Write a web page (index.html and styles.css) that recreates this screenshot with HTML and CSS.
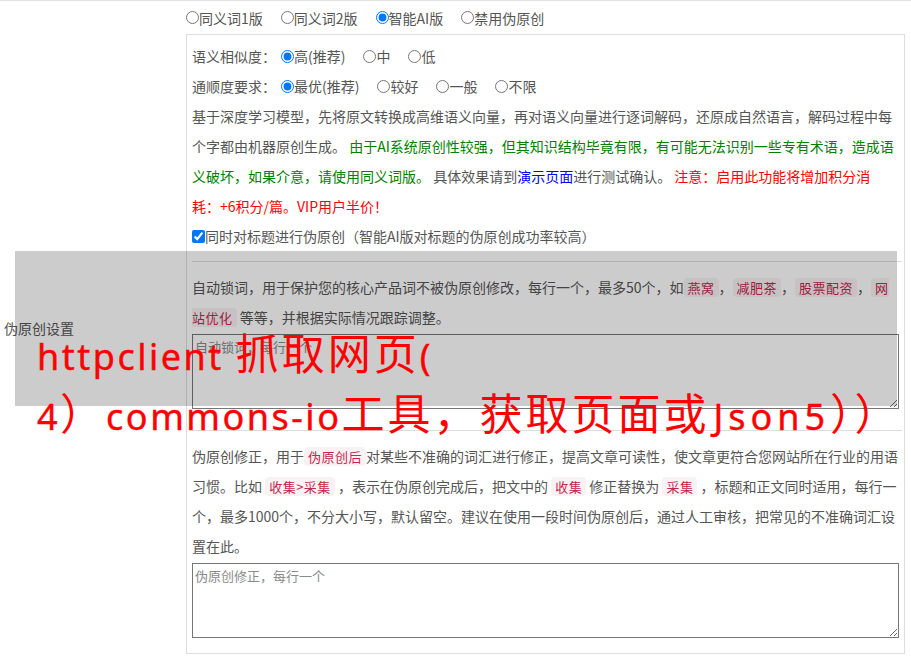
FILE: index.html
```html
<!DOCTYPE html>
<html lang="zh-CN">
<head>
<meta charset="utf-8">
<title>伪原创设置</title>
<link rel="stylesheet" href="styles.css">
</head>
<body>
<div class="form-row">
  <div class="row-label">伪原创设置</div>
  <div class="row-field">
    <div class="mode-options">
      <label class="opt"><input type="radio" name="mode">同义词1版</label>
      <label class="opt"><input type="radio" name="mode">同义词2版</label>
      <label class="opt"><input type="radio" name="mode" checked>智能AI版</label>
      <label class="opt"><input type="radio" name="mode">禁用伪原创</label>
    </div>
    <div class="settings-box">
      <div class="line">语义相似度：<label class="opt first"><input type="radio" name="sim" checked>高(推荐)</label><label class="opt"><input type="radio" name="sim">中</label><label class="opt"><input type="radio" name="sim">低</label></div>
      <div class="line">通顺度要求：<label class="opt first"><input type="radio" name="flu" checked>最优(推荐)</label><label class="opt"><input type="radio" name="flu">较好</label><label class="opt"><input type="radio" name="flu">一般</label><label class="opt"><input type="radio" name="flu">不限</label></div>
      <p class="desc">基于深度学习模型，先将原文转换成高维语义向量，再对语义向量进行逐词解码，还原成自然语言，解码过程中每<br>个字都由机器原创生成。 <span class="green">由于AI系统原创性较强，但其知识结构毕竟有限，有可能无法识别一些专有术语，造成语<br>义破坏，如果介意，请使用同义词版。</span> 具体效果请到<a class="link" href="#">演示页面</a>进行测试确认。 <span class="red">注意：启用此功能将增加积分消<br>耗：+6积分/篇。VIP用户半价！</span></p>
      <div class="line"><label class="check"><input type="checkbox" checked>同时对标题进行伪原创（智能AI版对标题的伪原创成功率较高）</label></div>
      <hr class="divider">
      <p class="desc">自动锁词，用于保护您的核心产品词不被伪原创修改，每行一个，最多50个，如<code class="tag">燕窝</code>，<code class="tag">减肥茶</code>，<code class="tag">股票配资</code>，<code class="tag">网<br>站优化</code> 等等，并根据实际情况跟踪调整。</p>
      <textarea class="field lock-field" placeholder="自动锁词，每行一个"></textarea>
      <hr class="divider">
      <p class="desc">伪原创修正，用于<code class="tag">伪原创后</code>对某些不准确的词汇进行修正，提高文章可读性，使文章更符合您网站所在行业的用语<br>习惯。比如 <code class="tag">收集&gt;采集</code> ，表示在伪原创完成后，把文中的 <code class="tag">收集</code> 修正替换为 <code class="tag">采集</code> ，标题和正文同时适用，每行一<br>个，最多1000个，不分大小写，默认留空。建议在使用一段时间伪原创后，通过人工审核，把常见的不准确词汇设<br>置在此。</p>
      <textarea class="field" placeholder="伪原创修正，每行一个"></textarea>
    </div>
  </div>
</div>
<div class="watermark">
  <div class="watermark-text"><span class="lat">httpclient </span>抓取网页<span class="lat">(</span><br><span class="lat">4</span>）<span class="lat">commons-io</span>工具，获取页面或<span class="lat json">Json5</span><span class="half">））</span></div>
</div>
</body>
</html>
```

FILE: styles.css
```css
html, body {
  margin: 0;
  padding: 0;
  background: #fff;
}

body {
  position: relative;
  font-family: "Noto Sans CJK SC", "Noto Sans", sans-serif;
  font-size: 14px;
  color: #555;
  overflow: hidden;
}

.form-row {
  display: grid;
  grid-template-columns: 186px 1fr;
  border-top: 1px solid #e3e3e3;
}

.row-label {
  align-self: center;
  padding: 0 0 0 4px;
  line-height: 20px;
}

.row-field {
  min-width: 0;
}

.mode-options {
  display: flex;
  align-items: center;
  height: 33px;
}

.opt {
  display: inline-flex;
  align-items: center;
  margin-right: 18px;
  line-height: 30px;
}

.opt.first {
  margin-left: 5px;
}

.opt input,
.check input {
  margin: 0;
  width: 13px;
  height: 13px;
}

.settings-box {
  margin-right: 6px;
  border: 1px solid #ddd;
  padding: 6px 2px 15px 5px;
}

.line {
  display: flex;
  align-items: center;
  height: 30px;
  white-space: nowrap;
}

.check {
  display: inline-flex;
  align-items: center;
}

.desc {
  margin: 0;
  line-height: 30px;
  white-space: nowrap;
}

.green {
  color: #008000;
}

.red {
  color: #f00;
}

.link {
  color: #00f;
  text-decoration: none;
}

.tag {
  font-family: "Noto Sans CJK SC", sans-serif;
  font-size: 13px;
  line-height: 1;
  letter-spacing: 0.5px;
  color: #c7254e;
  background: #f9f2f4;
  border-radius: 4px;
  padding: 0 4px;
}

.divider {
  border: 0;
  border-top: 1px solid #ddd;
  height: 0;
  margin: 10px 0;
}

.field {
  display: block;
  box-sizing: border-box;
  width: calc(100% - 3px);
  height: 75px;
  margin: 2px 0 0;
  padding: 2px;
  border: 1px solid #767676;
  font-family: "Noto Sans CJK SC", sans-serif;
  font-size: 13px;
  color: #555;
  background: #fff;
}

.field::placeholder {
  color: #8a8a8a;
}

.lock-field {
  margin-bottom: 21px;
}

.watermark {
  position: absolute;
  left: 15px;
  top: 251px;
  width: 882px;
  height: 155px;
  background: rgba(0, 0, 0, 0.2);
}

.watermark-text {
  position: absolute;
  left: 22px;
  top: 70px;
  color: #f00;
  font-family: "Noto Sans CJK SC", sans-serif;
  font-size: 43px;
  line-height: 60px;
  letter-spacing: 3px;
  white-space: nowrap;
}

.lat {
  font-family: "Noto Sans", sans-serif;
  font-size: 36px;
  line-height: 1;
  letter-spacing: 2.5px;
  -webkit-text-stroke: 0.4px #f00;
}

.json {
  letter-spacing: 5px;
  margin-left: 4px;
}

.half {
  font-feature-settings: "halt";
}
```
